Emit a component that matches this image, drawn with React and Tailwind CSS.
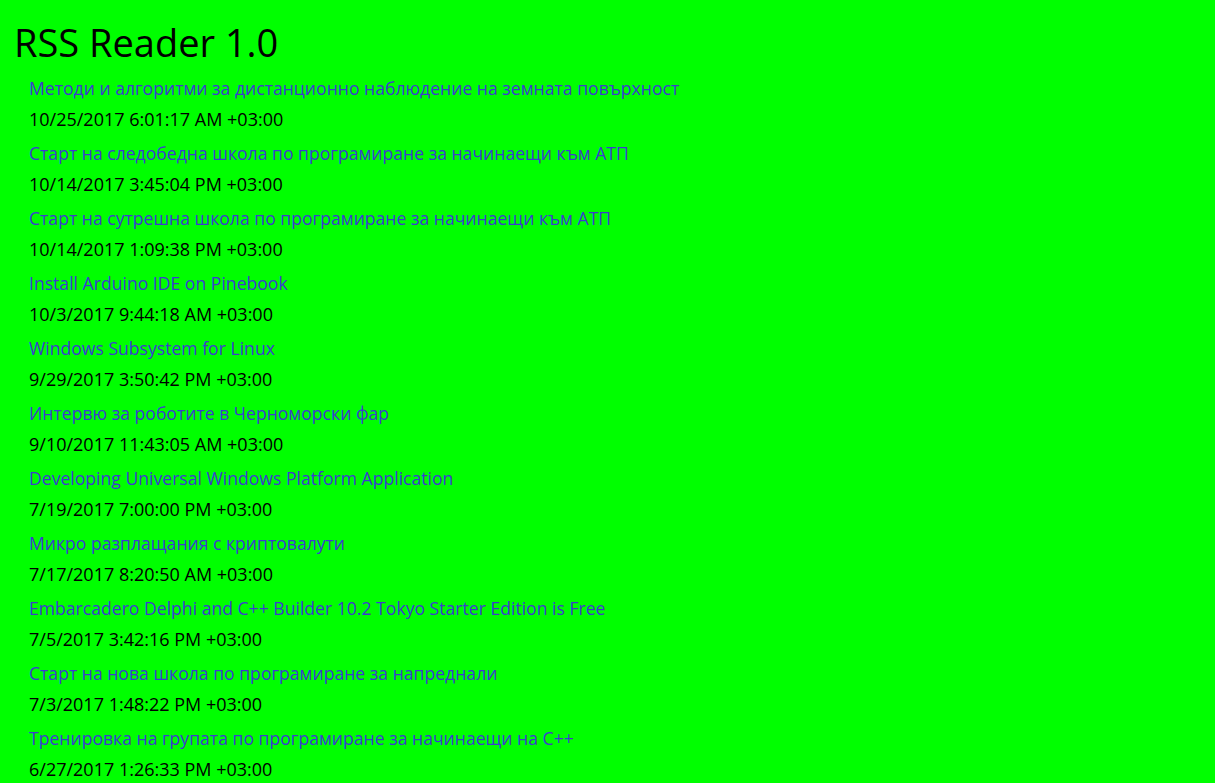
import React from "react";

const items = [
  ["Методи и алгоритми за дистанционно наблюдение на земната повърхност", "10/25/2017 6:01:17 AM +03:00"],
  ["Старт на следобедна школа по програмиране за начинаещи към АТП", "10/14/2017 3:45:04 PM +03:00"],
  ["Старт на сутрешна школа по програмиране за начинаещи към АТП", "10/14/2017 1:09:38 PM +03:00"],
  ["Install Arduino IDE on Pinebook", "10/3/2017 9:44:18 AM +03:00"],
  ["Windows Subsystem for Linux", "9/29/2017 3:50:42 PM +03:00"],
  ["Интервю за роботите в Черноморски фар", "9/10/2017 11:43:05 AM +03:00"],
  ["Developing Universal Windows Platform Application", "7/19/2017 7:00:00 PM +03:00"],
  ["Микро разплащания с криптовалути", "7/17/2017 8:20:50 AM +03:00"],
  ["Embarcadero Delphi and C++ Builder 10.2 Tokyo Starter Edition is Free", "7/5/2017 3:42:16 PM +03:00"],
  ["Старт на нова школа по програмиране за напреднали", "7/3/2017 1:48:22 PM +03:00"],
  ["Тренировка на групата по програмиране за начинаещи на C++", "6/27/2017 1:26:33 PM +03:00"],
];

export default function App() {
  return (
    <div
      className="w-[1215px] h-[783px] overflow-hidden bg-[#00ff00] text-black"
      style={{ fontFamily: '"Open Sans", "Noto Sans", sans-serif' }}
    >
      <h1 className="pl-[14px] pt-[18px] h-[72px] text-[38px] leading-[48px]">RSS Reader 1.0</h1>
      <div className="pl-[29px] flex flex-col">
        {items.map(([t, d], i) => (
          <div key={i} className="flex flex-col">
            <div className="h-[32px] flex items-center text-[17.6px] text-[#3b3bd0] whitespace-nowrap">{t}</div>
            <div className="h-[33px] flex items-center text-[18px] whitespace-nowrap -mt-[1px] mb-[1px]">{d}</div>
          </div>
        ))}
      </div>
    </div>
  );
}
